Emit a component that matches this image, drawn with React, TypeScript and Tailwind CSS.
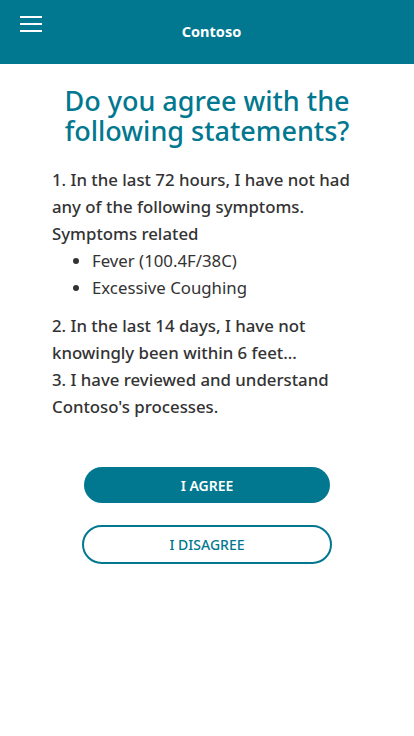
export default function App() {
  return (
    <div
      className="min-h-[736px] bg-white"
      style={{ fontFamily: '"Noto Sans", "Open Sans", sans-serif' }}
    >
      <header className="relative flex h-16 items-center justify-center bg-[#01788f]">
        <button className="absolute left-5 top-[16px] flex w-[22px] flex-col gap-[5px]" aria-label="Menu">
          <span className="h-[2px] w-full bg-white" />
          <span className="h-[2px] w-full bg-white" />
          <span className="h-[2px] w-full bg-white" />
        </button>
        <h1 className="ml-[9px] text-[14.5px] font-bold text-white">Contoso</h1>
      </header>

      <main className="px-[52px] pt-[22px]">
        <h2 className="text-center text-[27px] font-medium leading-[30px] text-[#01788f]">
          Do you agree with the following statements?
        </h2>

        <div className="mt-[20px] text-[16.8px] leading-[27px] text-[#333333]">
          <p className="font-medium">
            1. In the last 72 hours, I have not had any of the following symptoms. Symptoms related
          </p>
          <ul className="list-disc pl-[40px] font-normal marker:text-[#333333]">
            <li>Fever (100.4F/38C)</li>
            <li>Excessive Coughing</li>
          </ul>
          <p className="mt-[11px] font-medium">
            2. In the last 14 days, I have not knowingly been within 6 feet...
          </p>
          <p className="font-medium">3. I have reviewed and understand Contoso's processes.</p>
        </div>

        <div className="mt-[47px] flex flex-col items-center gap-[22px]">
          <button className="h-[36px] w-[246px] rounded-full bg-[#01788f] text-[14px] font-semibold text-white">
            I AGREE
          </button>
          <button className="h-[39px] w-[250px] rounded-full border-2 border-[#01788f] bg-white text-[14px] font-medium text-[#01788f]">
            I DISAGREE
          </button>
        </div>
      </main>
    </div>
  )
}
